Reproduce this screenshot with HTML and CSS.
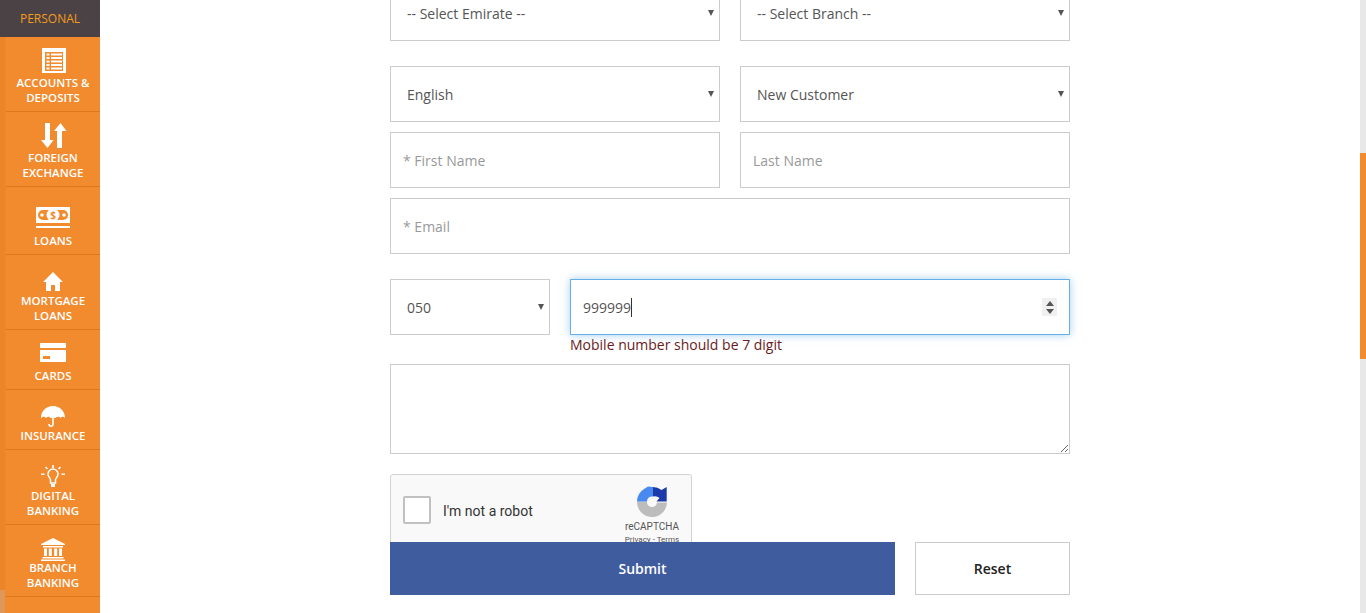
FILE: index.html
```html
<!DOCTYPE html>
<html lang="en">
<head>
<meta charset="utf-8">
<title>Apply</title>
<link rel="stylesheet" href="styles.css">
</head>
<body>
<div class="page">
  <nav class="sidebar">
    <div class="brand">PERSONAL</div>
    <div class="rail">
      <div class="rail-track"><div class="rail-thumb"></div></div>
      <ul class="menu">
        <li class="item"><svg class="ico" width="40" height="38" viewBox="0 0 40 38"><path fill="#fff" d="M9 11h24v25H9z"/><path fill="#f28a2e" d="M12 15h18v19H12z"/><path fill="#fff" d="M13.500 16.500h3v2h-3zM18 16.500h11v2H18zM13.500 20h3v2h-3zM18 20h11v2H18zM13.500 23.500h3v2h-3zM18 23.500h11v2H18zM13.500 27h3v2h-3zM18 27h11v2H18zM13.500 30.500h3v2h-3zM18 30.500h11v2H18z"/></svg><span class="label">ACCOUNTS &amp;<br>DEPOSITS</span></li>
        <li class="item"><svg class="ico" width="40" height="38" viewBox="0 0 40 38"><path fill="#fff" d="M12 11h5v17h3.500l-6 8-6.500-8H12zM24 19h-3l6.500-8 6 8H29v17h-5z"/></svg><span class="label">FOREIGN<br>EXCHANGE</span></li>
        <li class="item"><svg class="ico" width="40" height="46" viewBox="0 0 40 46"><path fill="#fff" d="M3 20h34v16H3zM3 39h34v2H3z"/><rect fill="#f28a2e" x="5" y="23" width="30" height="10" rx="5"/><circle fill="#fff" cx="20" cy="28" r="6.500"/><circle fill="#fff" cx="9" cy="28" r="1.800"/><circle fill="#fff" cx="31" cy="28" r="1.800"/><text class="dollar" x="20" y="31.500">$</text></svg><span class="label">LOANS</span></li>
        <li class="item"><svg class="ico" width="40" height="38" viewBox="0 0 40 38"><path fill="#fff" d="M20 17 30 27h-3v9h-5v-6h-4v6h-5v-9h-3z"/></svg><span class="label">MORTGAGE<br>LOANS</span></li>
        <li class="item"><svg class="ico" width="40" height="38" viewBox="0 0 40 38"><path fill="#fff" d="M7 13h26v5H7zM7 20h26v12H7z"/><path fill="#f28a2e" d="M10 26h7v3h-7z"/></svg><span class="label">CARDS</span></li>
        <li class="item"><svg class="ico" width="40" height="38" viewBox="0 0 40 38"><path fill="#fff" d="M8 28c0-7 5-12 12-12s12 5 12 12c-1.500-1.800-3.500-1.800-4.500 0-1-1.800-3.500-1.800-5 0h-5c-1-1.800-3-1.800-4.500 0-1-1.800-3.500-1.800-4.500 0z"/><path fill="none" stroke="#fff" stroke-width="1.600" d="M20 17v17c0 3-4 3-4 0"/></svg><span class="label">INSURANCE</span></li>
        <li class="item"><svg class="ico" width="40" height="38" viewBox="0 0 40 38"><path fill="none" stroke="#fff" stroke-width="1.500" d="M17.500 33v-3c0-2-2.500-3-2.500-6a5 5 0 0 1 10 0c0 3-2.500 4-2.500 6v3z"/><path fill="#fff" d="M18 34h4v3h-4zM19.200 15h1.600v3h-1.600zM8 25h3.500v-1.600H8zM28.500 25H32v-1.600h-3.500z"/><path stroke="#fff" stroke-width="1.600" d="M12.500 17l2 2M27.500 17l-2 2"/></svg><span class="label">DIGITAL<br>BANKING</span></li>
        <li class="item"><svg class="ico" width="40" height="35" viewBox="0 0 40 35"><path fill="#fff" d="M20 13 32 19v1H8v-1zM10 21h20v1.500H10zM11 23.500h3V31h-3zM15.800 23.500h3V31h-3zM21.200 23.500h3V31h-3zM26 23.500h3V31h-3zM9.500 32h21v1.600h-21zM8 34.500h24V36H8z"/></svg><span class="label">BRANCH<br>BANKING</span></li>
      </ul>
    </div>
  </nav>

  <main class="content">
    <form class="form">
      <div class="row">
        <div class="select"><select class="field"><option>-- Select Emirate --</option></select></div>
        <div class="select"><select class="field"><option>-- Select Branch --</option></select></div>
      </div>
      <div class="row row-gap">
        <div class="select"><select class="field"><option>English</option></select></div>
        <div class="select"><select class="field"><option>New Customer</option></select></div>
      </div>
      <div class="row row-near">
        <input class="field text" type="text" placeholder="* First Name">
        <input class="field text" type="text" placeholder="Last Name">
      </div>
      <div class="row row-near">
        <input class="field text" type="text" placeholder="* Email">
      </div>
      <div class="row row-gap">
        <div class="select code"><select class="field"><option>050</option></select></div>
        <div class="phone">
          <div class="number-wrap">
            <input class="field text number" type="number" value="999999" autofocus>
            <span class="caret"></span>
            <span class="spin"></span>
          </div>
          <div class="error">Mobile number should be 7 digit</div>
        </div>
      </div>
      <textarea class="field note"></textarea>
      <div class="captcha-clip">
        <div class="captcha">
          <span class="check"></span>
          <span class="robot">I'm not a robot</span>
          <div class="badge">
            <svg class="recap" width="32" height="32" viewBox="0 0 32 32">
              <path fill="#bdbdbd" d="M1 16.500H11A5 5 0 0 0 21 17.500H31A15 15 0 0 1 1 16.500Z"/>
              <path fill="#4a8af0" d="M1 16.500A15 15 0 0 1 8 4L12 1.500 17 2V11.500A5 5 0 0 0 11 16.500Z"/>
              <path fill="#1c3aa9" d="M17 2A15 15 0 0 1 25.500 5L30.700 2V16.500H20.500L23.500 13A7 7 0 0 0 17 11.500Z"/>
            </svg>
            <span class="brandmark">reCAPTCHA</span>
            <span class="terms">Privacy - Terms</span>
          </div>
        </div>
      </div>
      <div class="actions">
        <button class="btn submit" type="button">Submit</button>
        <button class="btn reset" type="button">Reset</button>
      </div>
    </form>
  </main>

  <div class="scrollbar"><div class="scroll-thumb"></div></div>
</div>
</body>
</html>
```

FILE: styles.css
```css
* { box-sizing: border-box; }
html, body { margin: 0; height: 100%; overflow: hidden; background: #fff; }
body { font-family: "Open Sans", sans-serif; font-size: 14px; color: #555; }

.page { display: flex; height: 613px; overflow: hidden; }

.sidebar { width: 100px; flex: none; background: #f28a2e; display: flex; flex-direction: column; }
.brand { height: 37px; background: #4a4244; color: #f59a1e; font-size: 12px; font-weight: 500; line-height: 38px; text-align: center; flex: none; }
.rail { display: flex; flex: 1; min-height: 0; }
.rail-track { width: 6px; flex: none; background: #ee8428; border-right: 1px solid #ec8a34; display: flex; flex-direction: column; justify-content: flex-end; }
.rail-thumb { height: 23px; background: #e2975a; }
.menu { list-style: none; margin: 0; padding: 0; flex: 1; }
.item { display: flex; flex-direction: column; align-items: center; padding-bottom: 6px; border-bottom: 1px solid #dd7719; }
.ico { display: block; flex: none; overflow: visible; }
.label { display: block; color: #fff; font-size: 11.5px; font-weight: 600; line-height: 15px; text-align: center; white-space: nowrap; }
.dollar { fill: #f28a2e; font-family: "Open Sans", sans-serif; font-size: 10px; font-weight: 700; text-anchor: middle; }

.content { flex: 1; min-width: 0; padding-left: 290px; }
.form { width: 680px; margin-top: -15px; }
.row { display: flex; gap: 20px; align-items: flex-start; }
.row-gap { margin-top: 25px; }
.row-near { margin-top: 10px; }

.field { flex: 1; min-width: 0; width: 100%; height: 56px; border: 1px solid #ccc; border-radius: 0; background-color: #fff; font-family: "Open Sans", sans-serif; font-size: 14px; color: #555; padding: 0 0 0 12px; outline: none; display: block; }
select.field { appearance: none; -webkit-appearance: none; padding-left: 16px; }
.select { position: relative; flex: 1; min-width: 0; }
.select::after { content: ""; position: absolute; right: 6px; top: 50%; margin-top: -3px; border-top: 6px solid #555; border-left: 3.5px solid transparent; border-right: 3.5px solid transparent; pointer-events: none; }
.text::placeholder { color: #999; opacity: 1; }
.select.code { flex: none; width: 160px; }
.phone { width: 500px; flex: none; }
.number-wrap { position: relative; height: 56px; }
.number { padding-right: 12px; appearance: textfield; -moz-appearance: textfield; }
.number:focus { border-color: #66afe9; box-shadow: 0 0 8px rgba(102, 175, 233, .6); }
.number::-webkit-inner-spin-button, .number::-webkit-outer-spin-button { -webkit-appearance: none; margin: 0; }
.caret { position: absolute; left: 61px; top: 19px; width: 1px; height: 19px; background: #333; }
.spin { position: absolute; left: 472px; top: 19px; width: 15px; height: 18px; background: #f0f0f0; display: flex; flex-direction: column; align-items: center; gap: 3px; padding-top: 3px; }
.spin::before { content: ""; border-bottom: 5px solid #555; border-left: 4px solid transparent; border-right: 4px solid transparent; }
.spin::after { content: ""; border-top: 5px solid #555; border-left: 4px solid transparent; border-right: 4px solid transparent; }
.error { height: 29px; line-height: 19px; color: #6b1a1a; font-size: 14px; }
.note { height: 90px; resize: vertical; padding: 8px 12px; }

.captcha-clip { height: 68px; margin-top: 20px; overflow: hidden; }
.captcha { position: relative; width: 302px; height: 76px; background: #f9f9f9; border: 1px solid #d3d3d3; border-radius: 3px; display: flex; align-items: center; font-family: Roboto, sans-serif; }
.check { width: 28px; height: 28px; margin-left: 12px; background: #fff; border: 2px solid #c1c1c1; border-radius: 2px; flex: none; margin-top: -4px; }
.robot { margin-left: 12px; font-size: 14px; color: #333; margin-top: -3px; }
.badge { position: absolute; left: 220px; top: 10px; width: 82px; display: flex; flex-direction: column; align-items: center; }
.recap { display: block; }
.brandmark { font-size: 10px; line-height: 12px; color: #555; margin-top: 4px; }
.terms { font-size: 8px; line-height: 12px; color: #555; margin-top: 1px; white-space: nowrap; }

.actions { display: flex; gap: 20px; }
.btn { height: 53px; font-family: "Open Sans", sans-serif; font-size: 14px; font-weight: 600; padding: 0; border-radius: 0; }
.submit { width: 505px; background: #3f5c9f; border: 1px solid #3f5c9f; color: #fff; }
.reset { width: 155px; background: #fff; border: 1px solid #ccc; color: #222; }

.scrollbar { width: 6px; flex: none; background: #e8e8e8; padding-top: 153px; }
.scroll-thumb { height: 206px; background: #f28a2e; }
```
